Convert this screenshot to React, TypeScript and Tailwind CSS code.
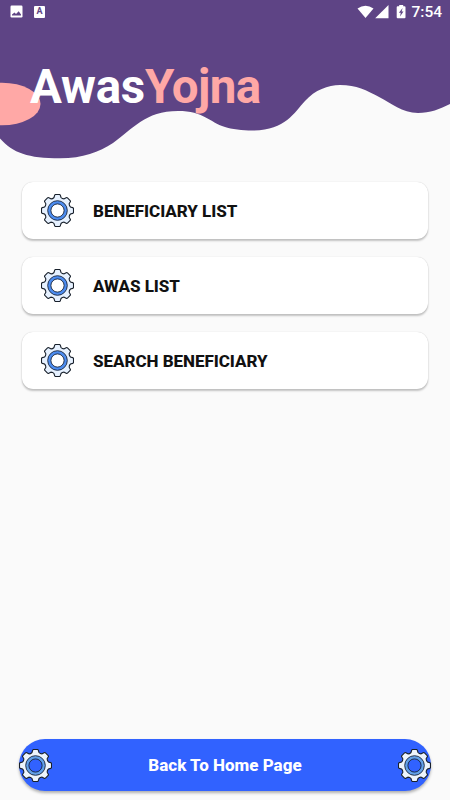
const menuItems = ['BENEFICIARY LIST', 'AWAS LIST', 'SEARCH BENEFICIARY'];

const TEETH = [0, 1, 2, 3, 4, 5, 6, 7];

function rotated(x: number, y: number, step: number) {
  const a = (step * Math.PI) / 4;
  const rx = x * Math.cos(a) - y * Math.sin(a);
  const ry = x * Math.sin(a) + y * Math.cos(a);
  return `${rx.toFixed(2)} ${ry.toFixed(2)}`;
}

// one tooth plus the valley after it, repeated every 45 degrees
const gearPath =
  TEETH.map(
    (i) =>
      `${i === 0 ? 'M' : 'L'}${rotated(-3.5, -13, i)} L${rotated(-2.9, -15.2, i)} Q${rotated(-2.7, -16, i)} ${rotated(-1.9, -16, i)} L${rotated(1.9, -16, i)} Q${rotated(2.7, -16, i)} ${rotated(2.9, -15.2, i)} L${rotated(3.5, -13, i)} Q${rotated(4.7, -11.6, i)} ${rotated(-3.5, -13, i + 1)}`,
  ).join(' ') + 'Z';

function GearIcon({ hollow = false }: { hollow?: boolean }) {
  return (
    <svg viewBox="-16.5 -16.5 33 33" className="h-[33px] w-[33px] shrink-0">
      <path d={gearPath} fill={hollow ? '#edf4fc' : '#e6f1ff'} stroke="#18202b" strokeWidth="1.1" />
      <circle r="8.2" fill={hollow ? '#3162ff' : '#fff'} stroke={hollow ? '#62a0e8' : '#4c8cf0'} strokeWidth="3.2" />
      <circle r="9.8" fill="none" stroke="#17243a" strokeWidth="0.9" />
      <circle r="6.6" fill="none" stroke="#17243a" strokeWidth="0.9" />
    </svg>
  );
}

function StatusBar() {
  return (
    <div className="relative flex h-[23px] items-center justify-between pr-2 pl-[10px] text-white">
      <div className="flex items-center gap-[11px]">
        <svg viewBox="0 0 13 13" className="h-[13px] w-[13px]">
          <rect x="0.5" y="0.5" width="12" height="12" rx="1.2" fill="#fff" />
          <path d="M2 10.5V9.5L4.5 7.5L6 9L8.7 6.3L11 9.5V10.5Z" fill="#5e4485" />
        </svg>
        <span className="flex h-3 w-[11px] items-center justify-center rounded-[1px] bg-white text-[9px] leading-none font-bold text-[#5e4485]">
          A
        </span>
      </div>
      <div className="flex items-center">
        <svg viewBox="0 0 50 16" className="h-4 w-[50px]">
          <path d="M0.5 4.5Q8.5 -1 16.5 4.5L8.5 14Z" fill="#fff" />
          <path d="M31.5 1V14.3H18.2Z" fill="#fff" />
          <path d="M42.2 1H46.2V2.2H47.5Q48.5 2.2 48.5 3.2V13.3Q48.5 14.3 47.5 14.3H40.7Q39.7 14.3 39.7 13.3V3.2Q39.7 2.2 40.7 2.2H42.2Z" fill="#fff" />
          <path d="M45.6 4L41.9 8.8H43.8L43 12.5L46.5 7.6H44.6Z" fill="#5e4485" />
        </svg>
        <span className="relative top-px ml-1 text-[15.5px] leading-none font-medium">7:54</span>
      </div>
    </div>
  );
}

function Header() {
  return (
    <header className="relative h-[182px]">
      <svg viewBox="0 0 450 182" className="absolute inset-0 h-[182px] w-[450px]">
        <path
          d="M0 0H450V104C440 109 430 113 418 113C402 113 391 103 380 97.5C366 90 357 85 340 85C328 85 315 90 305 101C294 113 285 130.5 252 130.5C243 130.5 231 129 225 127C209 122 204 111 178 111C145 111 133 129 113 143C99 152 83 158.3 60 158.3C28 158.3 13 153 0 138.5Z"
          fill="#5e4485"
        />
        <ellipse cx="2" cy="104" rx="38.5" ry="21.3" fill="#ffa8a6" />
      </svg>
      <StatusBar />
      <h1 className="relative mt-[36px] pl-[30px] text-[47.5px] leading-[56px] font-bold tracking-[-0.2px] text-white">
        Awas
        <span className="text-[#ffa8a6]">
          <span className="tracking-[-2.8px]">Y</span>
          <span className="tracking-[-0.6px]">ojna</span>
        </span>
      </h1>
    </header>
  );
}

export default function App() {
  return (
    <div className="flex h-[800px] w-[450px] flex-col overflow-hidden bg-[#fafafa] font-['Roboto',sans-serif]">
      <Header />
      <main className="flex flex-1 flex-col gap-[18px] px-[22px]">
        {menuItems.map((label) => (
          <button
            key={label}
            className="flex h-[57px] items-center rounded-[11px] bg-white pl-[19px] text-left text-[17px] font-extrabold text-[#111] shadow-[0_2px_2px_rgba(0,0,0,0.22),0_0_1px_rgba(0,0,0,0.22)]"
          >
            <GearIcon />
            <span className="ml-[19px] pt-[2px] tracking-[-0.04px]">{label}</span>
          </button>
        ))}
      </main>
      <footer className="px-[19px] pb-[9px]">
        <button className="flex h-[52px] w-full items-center justify-between rounded-full bg-[#3162ff] text-[17px] font-extrabold text-white shadow-[0_2px_3px_rgba(0,0,0,0.3)]">
          <GearIcon hollow />
          <span className="pt-[2px]">Back To Home Page</span>
          <GearIcon hollow />
        </button>
      </footer>
    </div>
  );
}
